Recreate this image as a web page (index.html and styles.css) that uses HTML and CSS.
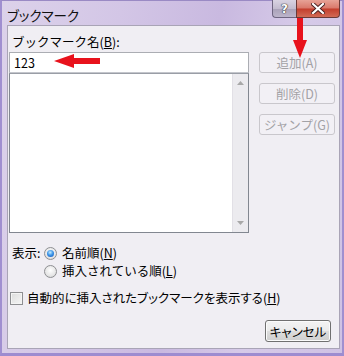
FILE: index.html
```html
<!DOCTYPE html>
<html lang="ja">
<head>
<meta charset="utf-8">
<title>ブックマーク</title>
<link rel="stylesheet" href="styles.css">
</head>
<body>
<div class="window">
  <div class="titlebar">
    <span class="title">ブックマーク</span>
    <div class="caption">
      <div class="cbtn help">?</div>
      <div class="cbtn close">
        <svg width="14" height="11" viewBox="0 0 14 11"><path d="M2 1 L12 10 M12 1 L2 10" stroke="#4a2020" stroke-width="4" stroke-linecap="square"/><path d="M2 1 L12 10 M12 1 L2 10" stroke="#fff" stroke-width="2.2" stroke-linecap="square"/></svg>
      </div>
    </div>
  </div>
  <div class="client">
    <div class="top">
      <div class="leftcol">
        <div class="label">ブックマーク名(<u>B</u>):</div>
        <div class="input">123</div>
        <div class="list">
          <div class="scroll">
            <svg class="sarrow" width="7" height="4" viewBox="0 0 7 4"><path d="M0 4 L3.5 0 L7 4 Z" fill="#a8a8a8"/></svg>
            <svg class="sarrow" width="7" height="4" viewBox="0 0 7 4"><path d="M0 0 L3.5 4 L7 0 Z" fill="#a8a8a8"/></svg>
          </div>
        </div>
      </div>
      <div class="rightcol">
        <div class="btn disabled b1">追加(A)</div>
        <div class="btn disabled b2">削除(D)</div>
        <div class="btn disabled b3">ジャンプ(G)</div>
      </div>
    </div>
    <div class="row r1">
      <span class="rlabel">表示:</span>
      <span class="radio on"><span class="dot"></span></span>
      <span class="rtext">名前順(<u>N</u>)</span>
    </div>
    <div class="row r2">
      <span class="rlabel"></span>
      <span class="radio"></span>
      <span class="rtext">挿入されている順(<u>L</u>)</span>
    </div>
    <div class="row r3">
      <span class="check"></span>
      <span class="ctext">自動的に挿入されたブックマークを表示する(<u>H</u>)</span>
    </div>
    <div class="footer">
      <div class="btn cancel">キャンセル</div>
    </div>
  </div>
  <svg class="arrow arrow-left" width="50" height="16" viewBox="0 0 50 16"><path d="M0 7 L20 0 L20 4 L46 4 L46 10 L20 10 L20 14 Z" fill="#e8121c"/></svg>
  <svg class="arrow arrow-down" width="18" height="42" viewBox="0 0 18 42"><path d="M6 0 L12 0 L12 22 L16 22 L9 40 L2 22 L6 22 Z" fill="#e8121c"/></svg>
</div>
</body>
</html>
```

FILE: styles.css
```css
html, body {
  margin: 0;
  padding: 0;
  background: #fff;
}

.window {
  position: relative;
  width: 344px;
  height: 356px;
  box-sizing: border-box;
  border: 2px solid #a08fd0;
  border-top: 1px solid #9a8ac4;
  border-bottom: 3px solid #9d8cd0;
  background: linear-gradient(100deg, #dcd2ea 0%, #d3c6e6 30%, #c9b9e0 55%, #d6cae8 75%, #cfc2e4 100%);
  display: flex;
  flex-direction: column;
  font-family: "Noto Sans CJK JP", "Noto Sans", sans-serif;
  font-size: 12.5px;
  color: #000;
}

.titlebar {
  height: 24px;
  display: flex;
  align-items: flex-start;
}

.title {
  padding-left: 5px;
  padding-top: 2px;
  line-height: 24px;
  font-size: 13.5px;
  font-feature-settings: "palt";
  color: #111;
}

.caption {
  margin-left: auto;
  margin-right: 2px;
  margin-top: -1px;
  display: flex;
}

.cbtn {
  height: 18px;
  box-sizing: border-box;
  display: flex;
  align-items: center;
  justify-content: center;
  border: 1px solid #6e6580;
  border-top: none;
}

.help {
  width: 24px;
  border-radius: 0 0 0 4px;
  border-right: none;
  background: linear-gradient(#d9d3e2 0%, #c3bccf 50%, #a9a1b8 51%, #bdb5cb 100%);
  color: #fff;
  font-family: "DejaVu Sans", sans-serif;
  font-weight: bold;
  font-size: 12px;
  text-shadow: 0 0 1px #333, 0 0 1px #333, 0 0 1px #333;
}

.close {
  width: 44px;
  border-radius: 0 0 4px 0;
  border-color: #6a3a38;
  background: linear-gradient(#e7a296 0%, #d9786a 48%, #c33d2c 52%, #d26a55 100%);
}

.client {
  flex: 1;
  margin: 0 2px 4px 5px;
  border: 1px solid #a9a4b6;
  background: #f0eef3;
  display: flex;
  flex-direction: column;
}

.top {
  display: flex;
  padding-left: 1px;
  gap: 10px;
}

.leftcol {
  width: 240px;
  display: flex;
  flex-direction: column;
}

.label {
  height: 26px;
  box-sizing: border-box;
  padding-top: 9px;
  padding-left: 3px;
  line-height: 14px;
}

.input {
  height: 21px;
  box-sizing: border-box;
  border: 1px solid #abadb3;
  border-bottom-color: #c4c6cc;
  background: #fff;
  padding-left: 4px;
  line-height: 19px;
}

.list {
  height: 160px;
  box-sizing: border-box;
  border: 1px solid #828790;
  border-top-color: #9a9ea6;
  background: #fff;
  display: flex;
  justify-content: flex-end;
}

.scroll {
  width: 15px;
  background: #ecebef;
  border-left: 1px solid #e2e0e6;
  display: flex;
  flex-direction: column;
  justify-content: space-between;
  align-items: center;
  padding: 7px 0 7px;
}

.rightcol {
  width: 76px;
  padding-top: 26px;
  display: flex;
  flex-direction: column;
}

.btn {
  box-sizing: border-box;
  height: 21px;
  display: flex;
  align-items: center;
  justify-content: center;
  border-radius: 3px;
}

.disabled {
  border: 1px solid #c9c7cc;
  color: #a3a2a6;
  background: #f2f0f5;
}

.b2 { margin-top: 10px; }
.b3 { margin-top: 10px; }

.row {
  display: flex;
  align-items: center;
  height: 18px;
  line-height: 18px;
}

.r1 { margin-top: 11px; padding-left: 4px; }
.r2 { margin-top: 0; padding-left: 4px; }
.r3 { margin-top: 9px; padding-left: 2px; }

.rlabel {
  width: 32px;
}

.radio {
  width: 13px;
  height: 13px;
  box-sizing: border-box;
  border-radius: 50%;
  border: 1px solid #8e8f92;
  background: radial-gradient(circle at 50% 40%, #ffffff 0%, #e6e6e6 60%, #cfcfcf 100%);
  display: flex;
  align-items: center;
  justify-content: center;
}

.dot {
  width: 7px;
  height: 7px;
  border-radius: 50%;
  background: radial-gradient(circle at 45% 35%, #c5ecff 0%, #3f97e8 45%, #0b4fb8 100%);
}

.rtext {
  margin-left: 5px;
}

.check {
  width: 13px;
  height: 13px;
  box-sizing: border-box;
  border: 1px solid #8e8f92;
  background: linear-gradient(135deg, #dcdcdc 0%, #f6f6f6 100%);
  box-shadow: inset 0 0 0 1px #f4f4f4;
}

.ctext {
  margin-left: 4px;
  font-feature-settings: "palt";
}

.footer {
  margin-top: 13px;
  display: flex;
  justify-content: flex-end;
  padding-right: 8px;
}

.cancel {
  width: 66px;
  height: 22px;
  border: 1px solid #707070;
  background: linear-gradient(#f3f3f3 0%, #ebebeb 50%, #dddddd 51%, #cfcfcf 100%);
  box-shadow: inset 0 0 0 1px #fbfbfb;
  font-feature-settings: "palt";
}

u {
  text-decoration: underline;
  text-underline-offset: 1px;
}

.arrow {
  position: absolute;
}

.arrow-left {
  left: 52px;
  top: 53px;
}

.arrow-down {
  left: 289px;
  top: 17px;
}
```
